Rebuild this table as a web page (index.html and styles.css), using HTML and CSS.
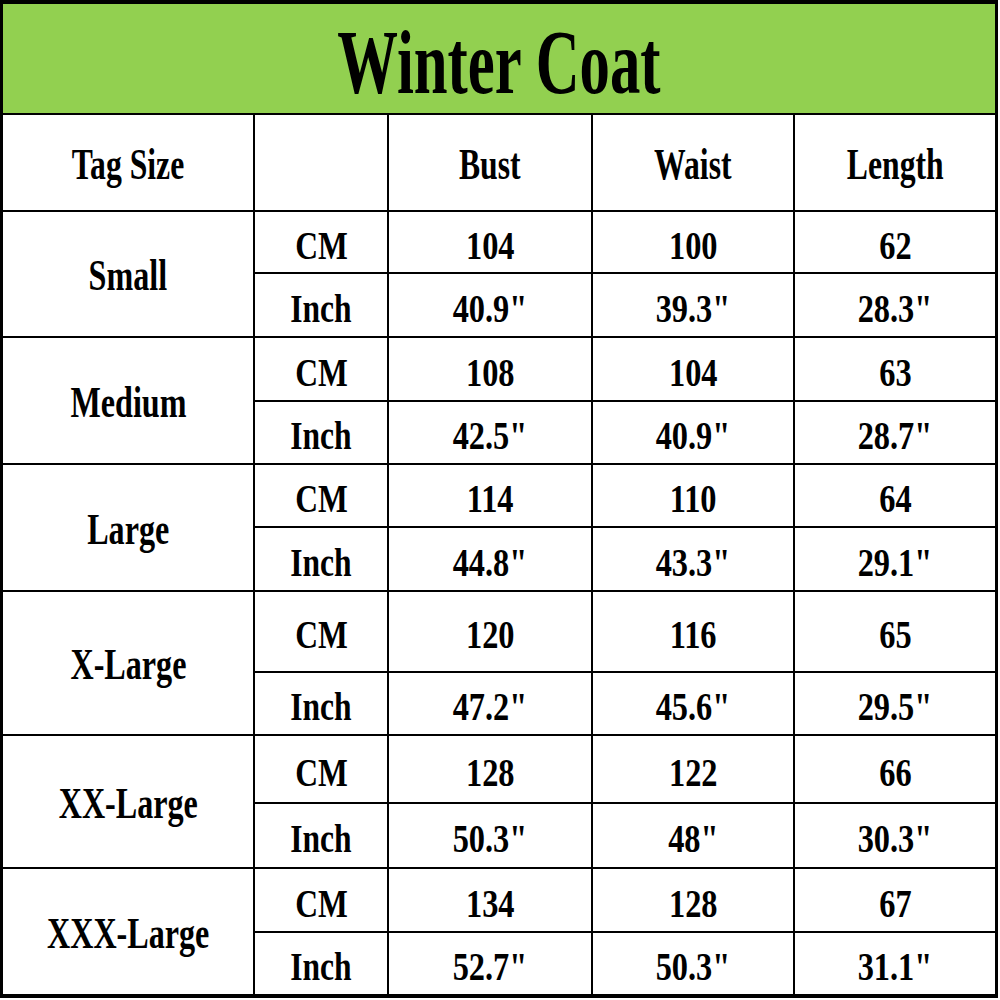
FILE: index.html
```html
<!DOCTYPE html>
<html>
<head>
<meta charset="utf-8">
<link rel="stylesheet" href="styles.css">
</head>
<body>
<div class="chart">
  <div class="title"><span class="t">Winter Coat</span></div>

  <div class="cell"><span class="hd">Tag Size</span></div>
  <div class="cell"></div>
  <div class="cell"><span class="hd">Bust</span></div>
  <div class="cell"><span class="hd">Waist</span></div>
  <div class="cell"><span class="hd">Length</span></div>

  <div class="cell size"><span class="lb">Small</span></div>
  <div class="cell"><span class="un">CM</span></div>
  <div class="cell"><span class="nm">104</span></div>
  <div class="cell"><span class="nm">100</span></div>
  <div class="cell"><span class="nm">62</span></div>
  <div class="cell"><span class="un">Inch</span></div>
  <div class="cell"><span class="nm">40.9"</span></div>
  <div class="cell"><span class="nm">39.3"</span></div>
  <div class="cell"><span class="nm">28.3"</span></div>

  <div class="cell size"><span class="lb">Medium</span></div>
  <div class="cell"><span class="un">CM</span></div>
  <div class="cell"><span class="nm">108</span></div>
  <div class="cell"><span class="nm">104</span></div>
  <div class="cell"><span class="nm">63</span></div>
  <div class="cell"><span class="un">Inch</span></div>
  <div class="cell"><span class="nm">42.5"</span></div>
  <div class="cell"><span class="nm">40.9"</span></div>
  <div class="cell"><span class="nm">28.7"</span></div>

  <div class="cell size"><span class="lb">Large</span></div>
  <div class="cell"><span class="un">CM</span></div>
  <div class="cell"><span class="nm">114</span></div>
  <div class="cell"><span class="nm">110</span></div>
  <div class="cell"><span class="nm">64</span></div>
  <div class="cell"><span class="un">Inch</span></div>
  <div class="cell"><span class="nm">44.8"</span></div>
  <div class="cell"><span class="nm">43.3"</span></div>
  <div class="cell"><span class="nm">29.1"</span></div>

  <div class="cell size"><span class="lb">X-Large</span></div>
  <div class="cell"><span class="un">CM</span></div>
  <div class="cell"><span class="nm">120</span></div>
  <div class="cell"><span class="nm">116</span></div>
  <div class="cell"><span class="nm">65</span></div>
  <div class="cell"><span class="un">Inch</span></div>
  <div class="cell"><span class="nm">47.2"</span></div>
  <div class="cell"><span class="nm">45.6"</span></div>
  <div class="cell"><span class="nm">29.5"</span></div>

  <div class="cell size"><span class="lb">XX-Large</span></div>
  <div class="cell"><span class="un">CM</span></div>
  <div class="cell"><span class="nm">128</span></div>
  <div class="cell"><span class="nm">122</span></div>
  <div class="cell"><span class="nm">66</span></div>
  <div class="cell"><span class="un">Inch</span></div>
  <div class="cell"><span class="nm">50.3"</span></div>
  <div class="cell"><span class="nm">48"</span></div>
  <div class="cell"><span class="nm">30.3"</span></div>

  <div class="cell size"><span class="lb">XXX-Large</span></div>
  <div class="cell"><span class="un">CM</span></div>
  <div class="cell"><span class="nm">134</span></div>
  <div class="cell"><span class="nm">128</span></div>
  <div class="cell"><span class="nm">67</span></div>
  <div class="cell"><span class="un">Inch</span></div>
  <div class="cell"><span class="nm">52.7"</span></div>
  <div class="cell"><span class="nm">50.3"</span></div>
  <div class="cell"><span class="nm">31.1"</span></div>
</div>
</body>
</html>
```

FILE: styles.css
```css
html, body {
  margin: 0;
  padding: 0;
  background: #ffffff;
}

.chart {
  box-sizing: border-box;
  width: 998px;
  height: 998px;
  padding: 4px 3px 4px 3px;
  background: #000000;
  display: grid;
  grid-template-columns: 250px 132px 202px 200px 200px;
  grid-template-rows: 109px 95px 60px 62px 62px 61px 61px 62px 79px 61px 66px 63px 62px 61px;
  gap: 2px;
  font-family: "Liberation Serif", "Times New Roman", serif;
  font-weight: bold;
  color: #000000;
}

.title {
  grid-column: 1 / span 5;
  background: #92d050;
  display: flex;
  align-items: center;
  justify-content: center;
}

.cell {
  background: #ffffff;
  display: flex;
  align-items: center;
  justify-content: center;
  overflow: hidden;
}

.size {
  grid-row: span 2;
}

.t, .hd, .lb, .un, .nm {
  display: inline-block;
  white-space: nowrap;
  line-height: 1;
}

.t {
  font-size: 92px;
  transform: scaleX(0.66);
  margin-top: 6px;
}

.hd {
  font-size: 44px;
  transform: scaleX(0.72);
  margin-top: 4px;
}

.lb {
  font-size: 44px;
  transform: scaleX(0.73);
  margin-top: 4px;
}

.un {
  font-size: 39px;
  transform: scaleX(0.81);
  margin-top: 6px;
}

.nm {
  font-size: 39px;
  transform: scaleX(0.83);
  margin-top: 6px;
}
```
